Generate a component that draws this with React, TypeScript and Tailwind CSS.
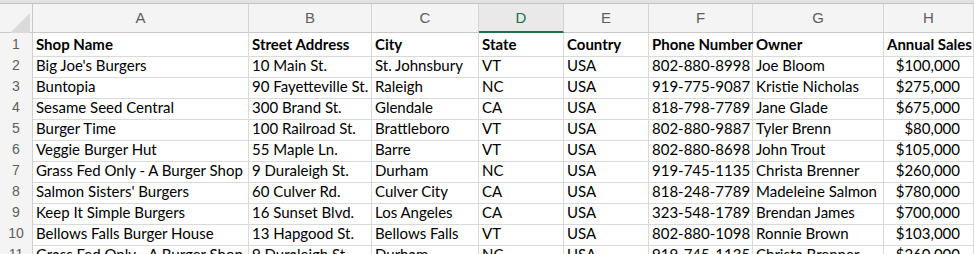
const COLUMNS = ["A", "B", "C", "D", "E", "F", "G", "H", ""];

const HEADERS = [
  "Shop Name",
  "Street Address",
  "City",
  "State",
  "Country",
  "Phone Number",
  "Owner",
  "Annual Sales",
];

const ROWS: string[][] = [
  ["Big Joe's Burgers", "10 Main St.", "St. Johnsbury", "VT", "USA", "802-880-8998", "Joe Bloom", "$100,000"],
  ["Buntopia", "90 Fayetteville St.", "Raleigh", "NC", "USA", "919-775-9087", "Kristie Nicholas", "$275,000"],
  ["Sesame Seed Central", "300 Brand St.", "Glendale", "CA", "USA", "818-798-7789", "Jane Glade", "$675,000"],
  ["Burger Time", "100 Railroad St.", "Brattleboro", "VT", "USA", "802-880-9887", "Tyler Brenn", "$80,000"],
  ["Veggie Burger Hut", "55 Maple Ln.", "Barre", "VT", "USA", "802-880-8698", "John Trout", "$105,000"],
  ["Grass Fed Only - A Burger Shop", "9 Duraleigh St.", "Durham", "NC", "USA", "919-745-1135", "Christa Brenner", "$260,000"],
  ["Salmon Sisters' Burgers", "60 Culver Rd.", "Culver City", "CA", "USA", "818-248-7789", "Madeleine Salmon", "$780,000"],
  ["Keep It Simple Burgers", "16 Sunset Blvd.", "Los Angeles", "CA", "USA", "323-548-1789", "Brendan James", "$700,000"],
  ["Bellows Falls Burger House", "13 Hapgood St.", "Bellows Falls", "VT", "USA", "802-880-1098", "Ronnie Brown", "$103,000"],
  ["Grass Fed Only - A Burger Shop", "9 Duraleigh St.", "Durham", "NC", "USA", "919-745-1135", "Christa Brenner", "$260,000"],
];

const grid =
  "grid grid-cols-[33px_216px_123px_107px_85px_85px_104px_131px_90px_1fr]";

function CornerCell() {
  return (
    <div className="relative border-r border-b border-[#c8c8c8] bg-[#f4f4f4]">
      <svg className="absolute left-[10px] top-[9px]" width="20" height="20" viewBox="0 0 20 20">
        <polygon points="20,0 20,20 0,20" fill="#dadada" />
      </svg>
    </div>
  );
}

function ColumnHeader({ letter }: { letter: string }) {
  const selected = letter === "D";
  return (
    <div
      className={
        selected
          ? "flex items-center justify-center border-r border-b-2 border-r-[#d4d4d4] border-b-[#1e7145] bg-[#e9e9e9] text-[#1e7145] pt-[1px]"
          : "flex items-center justify-center border-r border-b border-r-[#d4d4d4] border-b-[#c8c8c8] bg-[#f4f4f4] text-[#5f5f5f]"
      }
    >
      {letter}
    </div>
  );
}

function Row({ num, cells, bold }: { num: number; cells: string[]; bold?: boolean }) {
  return (
    <div className={`${grid} h-[21px]`}>
      <div className="flex items-center justify-center border-r border-b border-[#d0d0d0] bg-[#f4f4f4] text-[#5f5f5f] font-['Liberation_Sans',sans-serif] text-[14px]">
        {num}
      </div>
      {cells.map((text, i) => (
        <div
          key={i}
          className={`flex items-center overflow-visible whitespace-nowrap border-r border-b border-[#dadada] text-[15px] text-black ${
            bold ? "font-bold" : ""
          } ${i === 7 && !bold ? "justify-end pr-[13px]" : "pl-[3px]"}`}
        >
          {text}
        </div>
      ))}
      <div className="border-b border-[#dadada]" />
    </div>
  );
}

export default function App() {
  return (
    <div className="h-[254px] w-[974px] overflow-hidden bg-white font-['Lato',sans-serif]">
      <div className="h-[4px] border-b border-[#c4c4c4] bg-[#e2e2e2]" />
      <div className={`${grid} h-[29px] font-['Liberation_Sans',sans-serif] text-[15px]`}>
        <CornerCell />
        {COLUMNS.map((c, i) => (
          <ColumnHeader key={i} letter={c} />
        ))}
      </div>
      <Row num={1} cells={HEADERS} bold />
      {ROWS.map((cells, i) => (
        <Row key={i} num={i + 2} cells={cells} />
      ))}
    </div>
  );
}
